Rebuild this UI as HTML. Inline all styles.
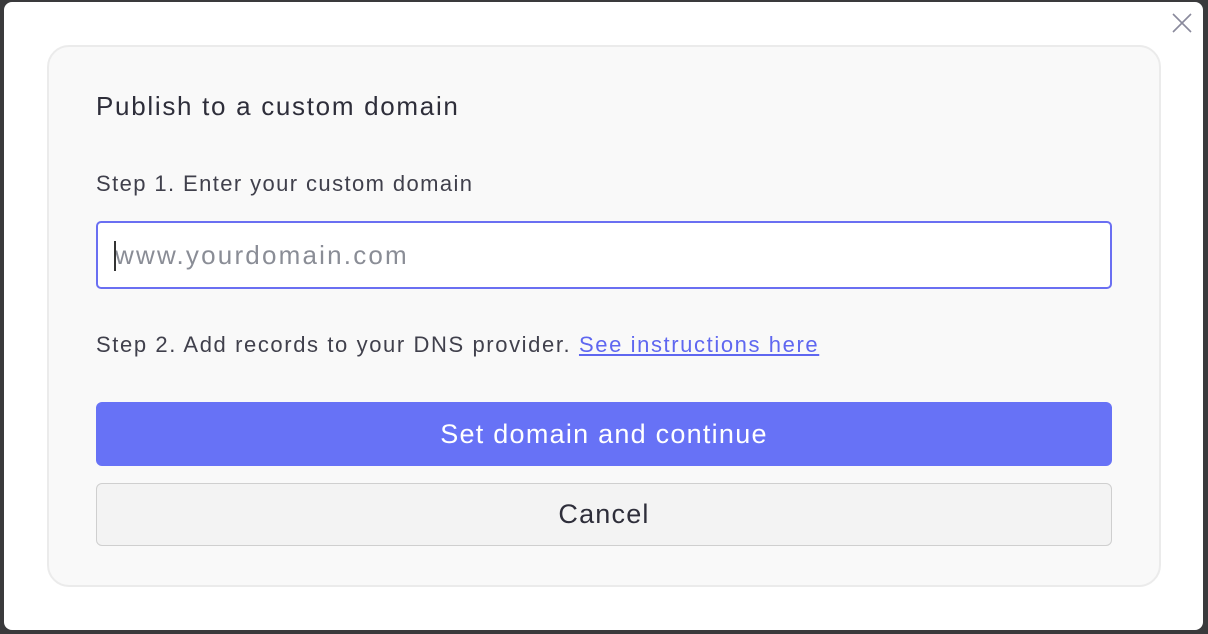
<!DOCTYPE html>
<html><head><style>
*{box-sizing:border-box;margin:0;padding:0}
body{width:1208px;height:634px;background:#3a3a3c;font-family:"Liberation Sans",sans-serif;position:relative;overflow:hidden}
.dlg{position:absolute;left:4px;top:2px;width:1199px;height:628px;background:#fff;border-radius:8px}
.x{position:absolute;left:1172px;top:13px}
.card{position:absolute;left:47px;top:45px;width:1114px;height:542px;background:#f9f9f9;border:2px solid #ebebeb;border-radius:22px}
.t{position:absolute;left:96px;color:#2e2e3a;white-space:nowrap}
.inp{position:absolute;left:96px;top:221px;width:1016px;height:68px;background:#fff;border:2px solid #6a6ff2;border-radius:5px;font-size:26px;letter-spacing:2.2px;color:#8a8d96;padding:0 0 0 17px;line-height:64px}
.cur{position:absolute;left:16px;top:18px;width:1.5px;height:30px;background:#333}
.btn{position:absolute;left:96px;width:1016px;border-radius:6px;text-align:center;font-size:27px}
</style></head><body>
<div class="dlg"></div>
<svg class="x" width="20" height="20" viewBox="0 0 20 20"><path d="M1 1L19 19M19 1L1 19" stroke="#8a8a9c" stroke-width="1.6"/></svg>
<div class="card"></div>
<div class="t" style="top:91px;font-size:26px;letter-spacing:1.7px">Publish to a custom domain</div>
<div class="t" style="top:171px;font-size:22px;letter-spacing:1.4px;color:#40404c">Step 1. Enter your custom domain</div>
<div class="inp"><div class="cur"></div>www.yourdomain.com</div>
<div class="t" style="top:332px;font-size:22px;letter-spacing:1.6px;color:#40404c">Step 2. Add records to your DNS provider. <span style="color:#5f67f0;text-decoration:underline">See instructions here</span></div>
<div class="btn" style="top:402px;height:64px;line-height:64px;background:#6772f6;color:#fff;letter-spacing:1.25px">Set domain and continue</div>
<div class="btn" style="top:483px;height:63px;line-height:60px;background:#f3f3f3;border:1.5px solid #cfcfcf;color:#2e2e3a;letter-spacing:1.2px">Cancel</div>
</body></html>
